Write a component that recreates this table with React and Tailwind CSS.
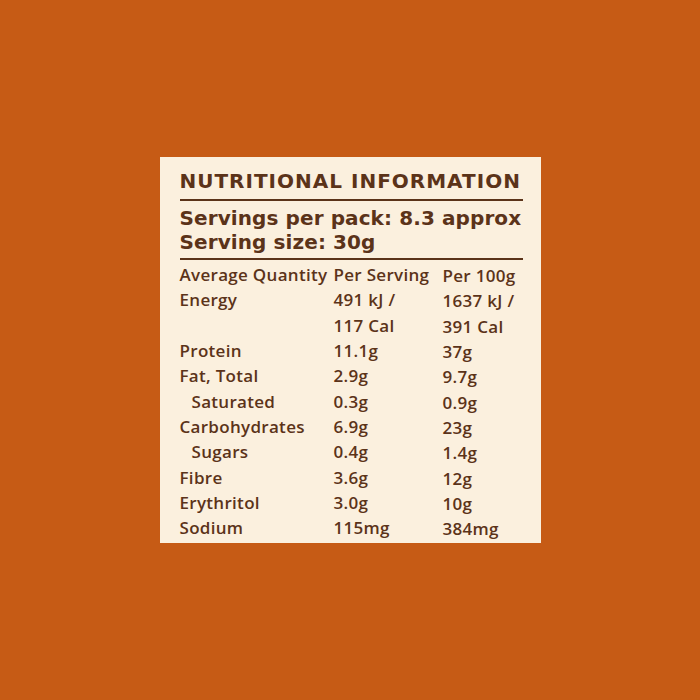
import React from "react";

const rows = [
  ["Average Quantity", "Per Serving", "Per 100g"],
  ["Energy", "491 kJ /", "1637 kJ /"],
  ["", "117 Cal", "391 Cal"],
  ["Protein", "11.1g", "37g"],
  ["Fat, Total", "2.9g", "9.7g"],
  ["Saturated", "0.3g", "0.9g", true],
  ["Carbohydrates", "6.9g", "23g"],
  ["Sugars", "0.4g", "1.4g", true],
  ["Fibre", "3.6g", "12g"],
  ["Erythritol", "3.0g", "10g"],
  ["Sodium", "115mg", "384mg"],
];

export default function App() {
  return (
    <div className="w-[700px] h-[700px] bg-[#c65b15] flex items-center justify-center text-[#5b3319]">
      <div className="w-[381px] h-[386px] bg-[#fbf0de] pl-5 pr-[18px] pt-[6px] flex flex-col">
        <div className="h-[36px] flex items-center text-[20px] font-bold leading-none tracking-[1px] font-['DejaVu_Sans',sans-serif]">
          NUTRITIONAL INFORMATION
        </div>
        <div className="h-[2px] bg-[#5b3319]" />
        <div className="h-[57px] flex flex-col justify-center text-[20px] font-bold leading-[24px] tracking-[0.1px] font-['DejaVu_Sans',sans-serif]">
          <div>Servings per pack: 8.3 approx</div>
          <div>Serving size: 30g</div>
        </div>
        <div className="h-[2px] bg-[#5b3319]" />
        <div className="pt-[2px] flex flex-col text-[17px] font-semibold leading-none tracking-[0.3px] font-['Open_Sans',sans-serif]">
          {rows.map(([a, b, c, indent], i) => (
            <div key={i} className="h-[25.3px] grid grid-cols-[154px_109px_1fr] items-center">
              <div className={indent ? "pl-3" : ""}>{a}</div>
              <div>{b}</div>
              <div className="pt-[2px]">{c}</div>
            </div>
          ))}
        </div>
      </div>
    </div>
  );
}
